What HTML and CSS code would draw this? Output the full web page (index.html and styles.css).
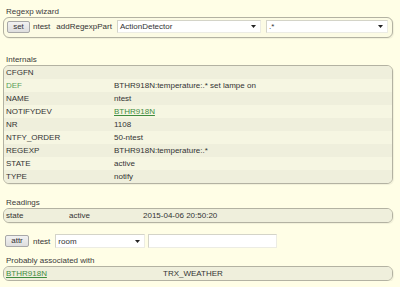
FILE: index.html
```html
<!DOCTYPE html>
<html lang="en">
<head>
    <meta charset="UTF-8">
    <meta name="viewport" content="width=device-width, initial-scale=1.0">
    <link rel="stylesheet" href="styles.css">
    <title>ntest</title>
</head>
<body>
    <div class="page">
        <div class="title">Regexp wizard</div>
        <div class="block wizard">
            <button class="btn btn-set">set</button>
            <span class="word dev-name">ntest</span>
            <span class="word cmd-name">addRegexpPart</span>
            <div class="select sel-device">
                <span>ActionDetector</span>
                <svg class="arrow" width="5" height="3" viewBox="0 0 5 3"><path d="M0 0H5L2.5 3Z"/></svg>
            </div>
            <div class="select sel-regexp">
                <span>.*</span>
                <svg class="arrow" width="5" height="3" viewBox="0 0 5 3"><path d="M0 0H5L2.5 3Z"/></svg>
            </div>
        </div>

        <div class="title title-gap">Internals</div>
        <div class="block internals">
            <div class="row even"><span>CFGFN</span><span></span></div>
            <div class="row odd"><span class="def">DEF</span><span>BTHR918N:temperature:.* set lampe on</span></div>
            <div class="row even"><span>NAME</span><span>ntest</span></div>
            <div class="row odd"><span>NOTIFYDEV</span><span><a href="#">BTHR918N</a></span></div>
            <div class="row even"><span>NR</span><span>1108</span></div>
            <div class="row odd"><span>NTFY_ORDER</span><span>50-ntest</span></div>
            <div class="row even"><span>REGEXP</span><span>BTHR918N:temperature:.*</span></div>
            <div class="row odd"><span>STATE</span><span>active</span></div>
            <div class="row even"><span>TYPE</span><span>notify</span></div>
        </div>

        <div class="title title-readings">Readings</div>
        <div class="block readings">
            <div class="row even"><span>state</span><span>active</span><span>2015-04-06 20:50:20</span></div>
        </div>

        <div class="attr-row">
            <button class="btn btn-attr">attr</button>
            <span class="word dev-name">ntest</span>
            <div class="select sel-attr">
                <span>room</span>
                <svg class="arrow" width="5" height="3" viewBox="0 0 5 3"><path d="M0 0H5L2.5 3Z"/></svg>
            </div>
            <input class="attr-value" type="text">
        </div>

        <div class="title title-assoc">Probably associated with</div>
        <div class="block assoc">
            <div class="row even"><span><a href="#">BTHR918N</a></span><span>TRX_WEATHER</span></div>
        </div>
    </div>
</body>
</html>
```

FILE: styles.css
```css
body {
    margin: 0;
    background-color: #fffee6;
    font-family: "Liberation Sans", Arial, sans-serif;
    font-size: 8px;
    color: #333;
}

.page {
    padding: 7px 0 0 3px;
    width: 390px;
}

.title {
    height: 10px;
    line-height: 10px;
    padding-left: 3px;
    color: #3a3a3a;
}

.title-gap {
    margin-top: 17px;
}

.title-readings {
    margin-top: 14px;
}

.title-assoc {
    margin-top: 8px;
}

.block {
    border: 1px solid #b3b2a2;
    border-radius: 6px;
    background-color: #f7f7e3;
    overflow: hidden;
    box-shadow: 1px 1px 1px rgba(0, 0, 0, 0.06);
}

.wizard {
    display: flex;
    align-items: center;
    padding: 2px 4px 4px 3px;
    background-color: #fcfbe4;
}

.btn {
    font-family: "Liberation Sans", Arial, sans-serif;
    font-size: 8px;
    color: #333;
    height: 12px;
    line-height: 10px;
    padding: 0;
    border: 1px solid #a8a8a8;
    border-radius: 2px;
    background: linear-gradient(#f2f2f2, #dedede);
}

.btn-set {
    width: 23px;
}

.btn-attr {
    width: 24px;
}

.word {
    white-space: nowrap;
}

.dev-name {
    margin-left: 3px;
}

.cmd-name {
    margin-left: 6px;
}

.select {
    display: flex;
    align-items: center;
    justify-content: space-between;
    box-sizing: border-box;
    height: 13px;
    line-height: 11px;
    padding: 0 4px 0 2px;
    background-color: #fff;
    border: 1px solid;
    border-color: #d4d4c8 #ececE4 #ececE4 #d4d4c8;
}

.arrow {
    fill: #222;
}

.sel-device {
    width: 144px;
    margin-left: 5px;
}

.sel-regexp {
    width: 122px;
    margin-left: 5px;
}

.row {
    display: grid;
    height: 13px;
    line-height: 13px;
    padding-left: 2px;
    white-space: nowrap;
}

.odd {
    background-color: #f6f6e2;
}

.even {
    background-color: #efefdc;
}

.internals .row {
    grid-template-columns: 108px 1fr;
}

.readings .row {
    grid-template-columns: 63px 74px 1fr;
}

.assoc .row {
    grid-template-columns: 157px 1fr;
}

.def {
    color: #5a9e5a;
}

a {
    color: #3f8c3f;
}

.attr-row {
    display: flex;
    align-items: center;
    margin: 11px 0 0 2px;
    height: 14px;
}

.attr-row .dev-name {
    margin-left: 4px;
}

.sel-attr {
    width: 90px;
    height: 14px;
    margin-left: 5px;
}

.attr-value {
    box-sizing: border-box;
    width: 129px;
    height: 14px;
    margin: 0 0 0 3px;
    padding: 0;
    border: 1px solid;
    border-color: #d4d4c8 #ececE4 #ececE4 #d4d4c8;
    background-color: #fff;
}
```
